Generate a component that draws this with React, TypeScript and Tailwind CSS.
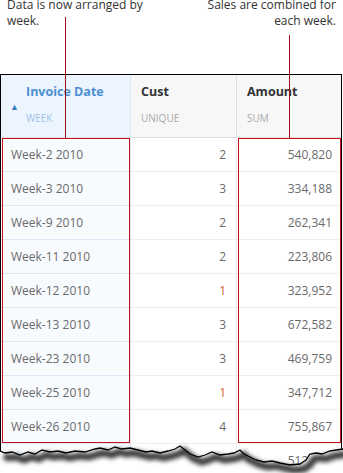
import React from "react";

const rows: { week: string; cust: string; amount: string; orange?: boolean }[] = [
  { week: "Week-2 2010", cust: "2", amount: "540,820" },
  { week: "Week-3 2010", cust: "3", amount: "334,188" },
  { week: "Week-9 2010", cust: "2", amount: "262,341" },
  { week: "Week-11 2010", cust: "2", amount: "223,806" },
  { week: "Week-12 2010", cust: "1", amount: "323,952", orange: true },
  { week: "Week-13 2010", cust: "3", amount: "672,582" },
  { week: "Week-23 2010", cust: "3", amount: "469,759" },
  { week: "Week-25 2010", cust: "1", amount: "347,712", orange: true },
  { week: "Week-26 2010", cust: "4", amount: "755,867" },
  { week: "Week-27 2010", cust: "2", amount: "512,404" },
];

const tear: [number, number][] = [
  [0, 13], [5, 15], [12, 14], [20, 17], [28, 14], [35, 16], [42, 12], [50, 14], [58, 13],
  [66, 15], [75, 13], [85, 14], [95, 11], [100, 10], [108, 12], [115, 9], [122, 11],
  [130, 10], [138, 12], [146, 14], [152, 13], [160, 15], [168, 13], [175, 11], [180, 8],
  [185, 12], [190, 16], [198, 19], [205, 17], [212, 14], [220, 17], [228, 16], [234, 15],
  [240, 12], [244, 16], [250, 19], [256, 22], [264, 24], [272, 23], [280, 25], [290, 27],
  [300, 26], [306, 22], [310, 16], [316, 15], [322, 16], [330, 13], [343, 11],
];

export default function App() {
  const line = tear.map(([x, y], i) => `${i === 0 ? "M" : "L"}${x} ${y}`).join(" ");
  const fill = `${line} L343 40 L0 40 Z`;
  return (
    <div
      className="relative w-[343px] h-[473px] overflow-hidden bg-white"
      style={{ fontFamily: '"Open Sans", "Liberation Sans", sans-serif' }}
    >
      <div className="h-[74px] flex justify-between items-start px-[7px] text-[12px] leading-[16px] text-[#333]">
        <div className="-mt-[3px]">
          Data is now arranged by
          <br />
          week.
        </div>
        <div className="-mt-[3px] text-right">
          Sales are combined for
          <br />
          each week.
        </div>
      </div>

      <div className="relative w-[342px] border border-black border-b-0">
        <div className="grid grid-cols-[130px_106px_104px]">
          <div className="h-[63px] bg-[#ecf4fd] border-r border-b border-[#dde6ef] flex items-start">
            <div className="w-[25px] pt-[27px] pl-[9px] text-[9px] leading-[10px] text-[#3a7dc0]">▲</div>
            <div className="pt-[9px]">
              <div className="text-[12.5px] leading-[16px] font-bold text-[#4a8fd2]">Invoice Date</div>
              <div className="mt-[11px] text-[10px] leading-[14px] text-[#9fc3e8]">WEEK</div>
            </div>
          </div>
          <div className="h-[63px] bg-[#f7f7f7] border-r border-b border-[#e0e0e0] pl-[10px] pt-[9px]">
            <div className="text-[12.5px] leading-[16px] font-bold text-[#333]">Cust</div>
            <div className="mt-[11px] text-[10px] leading-[14px] text-[#aaa]">UNIQUE</div>
          </div>
          <div className="h-[63px] bg-[#f7f7f7] border-b border-[#e0e0e0] pl-[10px] pt-[9px]">
            <div className="text-[12.5px] leading-[16px] font-bold text-[#333]">Amount</div>
            <div className="mt-[11px] text-[10px] leading-[14px] text-[#aaa]">SUM</div>
          </div>

          {rows.map((r) => (
            <React.Fragment key={r.week}>
              <div className="h-[34px] bg-[#f8fbfe] border-r border-b border-[#dbe7f4] pl-[10px] flex items-center text-[12px] text-[#6a6a6a]">
                {r.week}
              </div>
              <div
                className={
                  r.orange
                    ? "h-[34px] border-r border-b border-[#eeeeee] pr-[10px] flex items-center justify-end text-[12px] text-[#d2622a]"
                    : "h-[34px] border-r border-b border-[#eeeeee] pr-[10px] flex items-center justify-end text-[12px] text-[#6a6a6a]"
                }
              >
                {r.cust}
              </div>
              <div className="h-[34px] border-b border-[#eeeeee] pr-[9px] flex items-center justify-end text-[12px] text-[#6a6a6a]">
                {r.amount}
              </div>
            </React.Fragment>
          ))}
        </div>

        <div className="absolute left-[1px] top-[63px] w-[128px] h-[305px] border-[1.5px] border-[#c8101a]" />
        <div className="absolute left-[237px] top-[63px] w-[103px] h-[305px] border-[1.5px] border-[#c8101a]" />
      </div>

      <div className="absolute left-[65px] top-[17px] w-px h-[121px] bg-[#9b0f14]" />
      <div className="absolute left-[289px] top-[35px] w-px h-[103px] bg-[#9b0f14]" />

      <svg className="absolute left-0 top-[438px]" width="343" height="35" viewBox="0 0 343 35">
        <defs>
          <filter id="blur" x="-10%" y="-50%" width="120%" height="200%">
            <feGaussianBlur stdDeviation="2.2" />
          </filter>
        </defs>
        <path d={fill} fill="#ffffff" />
        <path d={line} transform="translate(4 5)" stroke="#3a3a3a" strokeWidth="7" fill="none" filter="url(#blur)" />
        <path d={line} stroke="#000" strokeWidth="1.3" fill="none" />
      </svg>
    </div>
  );
}
